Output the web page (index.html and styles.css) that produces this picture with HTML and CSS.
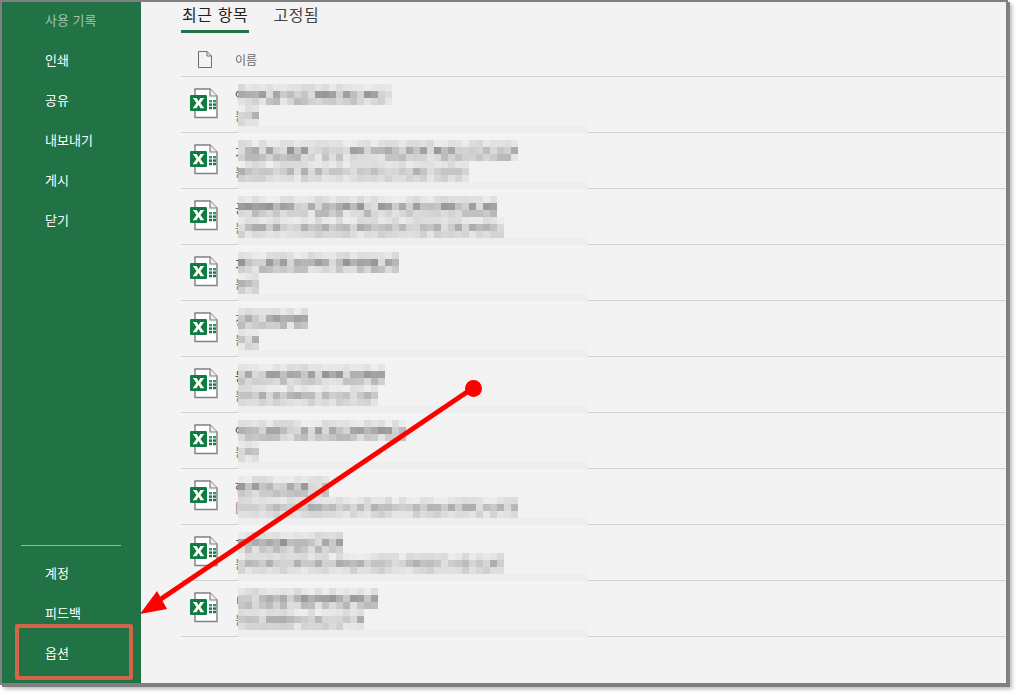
FILE: index.html
```html
<!DOCTYPE html>
<html lang="ko">
<head>
<meta charset="utf-8">
<title>Excel 공유</title>
<link rel="stylesheet" href="styles.css">
</head>
<body>
<svg class="defs" width="0" height="0" aria-hidden="true">
  <defs>
    <symbol id="xl" viewBox="0 0 28 32">
      <path d="M5 1H20L27 8V29.500H5Z" fill="#fff" stroke="#7f7f7f" stroke-width="1.4"/>
      <path d="M20 1V8H27" fill="#eee" stroke="#7f7f7f" stroke-width="1.2"/>
      <g fill="#21a366">
        <rect x="19" y="12" width="3" height="2.400"/><rect x="23" y="12" width="3" height="2.400"/>
      </g>
      <g fill="#107c41">
        <rect x="19" y="15.400" width="3" height="2.400"/><rect x="23" y="15.400" width="3" height="2.400"/>
        <rect x="19" y="18.800" width="3" height="2.400"/><rect x="23" y="18.800" width="3" height="2.400"/>
      </g>
      <rect x="0" y="7" width="17" height="16" rx="1.200" fill="#107c41"/>
      <path d="M2.800 10H6.600L8.500 13.300L10.400 10H14.200L10.500 15L14.300 20.200H10.500L8.500 16.800L6.500 20.200H2.700L6.500 15Z" fill="#fff"/>
    </symbol>
  </defs>
</svg>
<div class="window">
  <aside class="sidebar">
    <nav class="nav-top">
      <a class="nav-item muted">사용 기록</a>
      <a class="nav-item">인쇄</a>
      <a class="nav-item">공유</a>
      <a class="nav-item">내보내기</a>
      <a class="nav-item">게시</a>
      <a class="nav-item">닫기</a>
    </nav>
    <nav class="nav-bottom">
      <hr class="nav-rule">
      <a class="nav-item">계정</a>
      <a class="nav-item">피드백</a>
      <a class="nav-item nav-highlight">옵션</a>
    </nav>
  </aside>
  <main class="content">
    <div class="tabs">
      <span class="tab active">최근 항목</span>
      <span class="tab">고정됨</span>
    </div>
    <div class="head-row">
      <svg class="file-icon" width="14" height="17" viewBox="0 0 14 17"><path d="M.5.5H9L13.500 5V16.500H.5ZM9 .5V5H13.500" fill="none" stroke="#6e6e6e"/></svg>
      <span class="head-label">이름</span>
    </div>
    <ul class="files">
      <li class="file" data-a="22" data-b="3" data-s="11"><svg class="xl"><use href="#xl"/></svg><div class="meta"><span class="name">엑</span><span class="path">문</span></div><canvas class="mosaic" width="350" height="49"></canvas></li>
      <li class="file" data-a="40" data-b="33" data-s="23"><svg class="xl"><use href="#xl"/></svg><div class="meta"><span class="name">기</span><span class="path">문</span></div><canvas class="mosaic" width="350" height="49"></canvas></li>
      <li class="file" data-a="37" data-b="38" data-s="37"><svg class="xl"><use href="#xl"/></svg><div class="meta"><span class="name">공</span><span class="path">문</span></div><canvas class="mosaic" width="350" height="49"></canvas></li>
      <li class="file" data-a="23" data-b="3" data-s="41"><svg class="xl"><use href="#xl"/></svg><div class="meta"><span class="name">기</span><span class="path">문</span></div><canvas class="mosaic" width="350" height="49"></canvas></li>
      <li class="file" data-a="10" data-b="3" data-s="53"><svg class="xl"><use href="#xl"/></svg><div class="meta"><span class="name">정</span><span class="path">문</span></div><canvas class="mosaic" width="350" height="49"></canvas></li>
      <li class="file" data-a="21" data-b="20" data-s="67"><svg class="xl"><use href="#xl"/></svg><div class="meta"><span class="name">등</span><span class="path">문</span></div><canvas class="mosaic" width="350" height="49"></canvas></li>
      <li class="file" data-a="24" data-b="3" data-s="71"><svg class="xl"><use href="#xl"/></svg><div class="meta"><span class="name">엑</span><span class="path">문</span></div><canvas class="mosaic" width="350" height="49"></canvas></li>
      <li class="file" data-a="13" data-b="40" data-s="83"><svg class="xl"><use href="#xl"/></svg><div class="meta"><span class="name">핵</span><span class="path">[</span></div><canvas class="mosaic" width="350" height="49"></canvas></li>
      <li class="file" data-a="15" data-b="38" data-s="97"><svg class="xl"><use href="#xl"/></svg><div class="meta"><span class="name">기</span><span class="path">문</span></div><canvas class="mosaic" width="350" height="49"></canvas></li>
      <li class="file" data-a="20" data-b="18" data-s="101"><svg class="xl"><use href="#xl"/></svg><div class="meta"><span class="name">ㅂ</span><span class="path">문</span></div><canvas class="mosaic" width="350" height="49"></canvas></li>
    </ul>
  </main>
  <svg class="annotation" width="1004" height="681" viewBox="2 2 1004 681" aria-hidden="true">
    <line x1="473" y1="388" x2="158" y2="601" stroke="#ff0000" stroke-width="5"/>
    <circle cx="473.500" cy="388.500" r="8.500" fill="#ff0000"/>
    <polygon points="140,614 157,591 167,609" fill="#ff0000"/>
  </svg>
</div>
<script src="mosaic.js"></script>
</body>
</html>
```
FILE: styles.css
```css
*, *::before, *::after { box-sizing: border-box; }
html, body { margin: 0; height: 100%; }
body {
  background: #fff;
  padding: 2px;
  font-family: "Noto Sans CJK KR", "Noto Sans", sans-serif;
  overflow: hidden;
}
.defs { position: absolute; }
.window {
  position: relative;
  display: flex;
  width: 1004px;
  height: 681px;
  background: #f3f3f3;
  box-shadow: 0 0 0 2px #808080, 2px 2px 0 2px #808080, 4px 4px 4px 2px rgba(128,128,128,.55);
}
.sidebar {
  width: 139px;
  flex: none;
  display: flex;
  flex-direction: column;
  justify-content: space-between;
  background: #217346;
  color: #fff;
  overflow: hidden;
}
.nav-top { margin-top: -2px; }
.nav-bottom { padding-bottom: 10px; }
.nav-item {
  display: flex;
  align-items: center;
  height: 40px;
  padding: 0 0 2px 43px;
  font-size: 13px;
  line-height: 1;
}
.muted { color: #a3c4b0; }
.nav-rule {
  height: 1px;
  margin: 0 20px 7px 19px;
  border: 0;
  background: #8fbb9f;
}
.nav-highlight { position: relative; }
.nav-highlight::after {
  content: "";
  position: absolute;
  left: 13px;
  top: -9px;
  width: 118px;
  height: 56px;
  border: 4px solid #d2664a;
  border-radius: 2px;
}
.content {
  flex: 1;
  min-width: 0;
  padding-left: 40px;
}
.tabs {
  display: flex;
  gap: 23px;
  height: 31px;
}
.tab {
  height: 31px;
  padding: 0 1px;
  font-size: 16px;
  line-height: 25px;
  letter-spacing: .6px;
  color: #444;
}
.tab.active {
  color: #222;
  border-bottom: 3px solid #217346;
}
.head-row {
  display: flex;
  align-items: center;
  height: 44px;
  padding-top: 9px;
  border-bottom: 1px solid #d2d2d2;
}
.file-icon { margin-left: 17px; flex: none; }
.head-label {
  margin-left: 23px;
  font-size: 12px;
  color: #6a6a6a;
}
.files { list-style: none; margin: 0; padding: 0; }
.file {
  position: relative;
  display: flex;
  height: 56px;
  border-bottom: 1px solid #d2d2d2;
}
.xl {
  width: 28px;
  height: 32px;
  margin: 11px 0 0 9px;
  flex: none;
}
.meta {
  display: flex;
  flex-direction: column;
  margin-left: 17px;
  padding-top: 9px;
  font-size: 13px;
  line-height: 20px;
  color: #444;
}
.path { font-size: 12px; color: #777; }
.mosaic {
  position: absolute;
  left: 57px;
  top: 7px;
  width: 350px;
  height: 49px;
}
.annotation {
  position: absolute;
  left: 0;
  top: 0;
  pointer-events: none;
}
```
FILE: mosaic.js
```js
// Pixelated redaction over each file's name and path.
document.querySelectorAll('.file').forEach(function (row) {
  var seed = Number(row.dataset.s);
  function rnd() {
    seed = (seed * 16807) % 2147483647;
    return (seed % 1000) / 1000;
  }
  for (var i = 0; i < 5; i++) rnd();
  var ctx = row.querySelector('canvas').getContext('2d');
  var CELL = 7;
  function cell(x, y, shade) {
    var v = Math.round(shade);
    ctx.fillStyle = 'rgb(' + v + ',' + v + ',' + v + ')';
    ctx.fillRect(x * CELL, y * CELL, CELL, CELL);
  }
  function line(top, count, mid, low) {
    for (var x = 0; x < count; x++) {
      var r = rnd();
      cell(x, top, 238 - rnd() * 22);
      cell(x, top + 1, 222 - r * mid);
      cell(x, top + 2, 232 - rnd() * low);
    }
  }
  ctx.fillStyle = '#f2f2f2';
  ctx.fillRect(0, 0, 350, 42);
  line(0, Number(row.dataset.a), 75, 50);
  line(3, Number(row.dataset.b), 50, 25);
  ctx.fillStyle = '#eeeeee';
  ctx.fillRect(0, 42, 350, 7);
});
```
